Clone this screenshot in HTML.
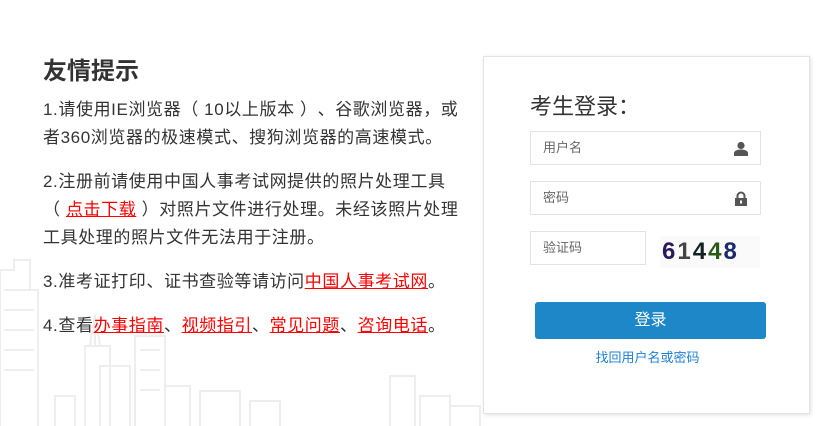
<!DOCTYPE html>
<html><head><meta charset="utf-8"><style>
*{margin:0;padding:0;box-sizing:border-box}
body{width:821px;height:426px;background:#fff;position:relative;overflow:hidden;font-family:"Liberation Sans","Noto Sans CJK SC",sans-serif;color:#333;text-spacing-trim:space-all}
.sky{position:absolute;left:0;top:0}
.tips{position:absolute;left:43px;top:56px;width:440px;white-space:nowrap}
.tips h2{font-size:24px;font-weight:bold;color:#333;line-height:32px;margin-bottom:8px}
.tips p{font-size:17px;line-height:28px;margin-bottom:16px;color:#333;letter-spacing:0.6px}
.tips a{color:#f00;text-decoration:underline}
.panel{position:absolute;left:483px;top:56px;width:327px;height:358px;background:#fff;border:1px solid #e3e3e3;box-shadow:1px 1px 4px rgba(0,0,0,.12)}
.panel h3{position:absolute;left:46px;top:32px;font-size:22px;font-weight:normal;color:#333}
.inp{position:absolute;border:1px solid #e3e3e3;height:34px;font-size:13px;color:#666;line-height:32px;padding-left:12px;background:#fff}
.btn{position:absolute;left:51px;top:245px;width:231px;height:37px;background:#1e87c8;border-radius:3px;color:#fff;font-size:16px;text-align:center;line-height:37px}
.link{position:absolute;left:0;width:327px;top:290px;text-align:center;font-size:13px;color:#1e7fd6}
</style></head><body>
<svg class="sky" width="821" height="426" fill="none" stroke="#eeeeee" stroke-width="2">
<path d="M0 426V270h14v-10h16v30h8v136M4 290h30M4 310h30M4 330h30M4 350h30M4 370h30"/>
<path d="M55 426v-30h20v30M85 426v-80h25v80M95 315v30M90 345l5-30 5 30"/>
<path d="M100 426v-60h30v60M135 426v-90h30v90M140 350h20M140 370h20M140 390h20"/>
<path d="M165 426v-40h25v40M200 426v-35h40v35M250 426v-25h30v25"/>
<path d="M390 426v-50h25v50M420 426v-30h30v30"/>
<path d="M450 426v-20h30v20"/>
</svg>
<div class="tips">
<h2>友情提示</h2>
<p>1.请使用IE浏览器（ 10以上版本 ）、谷歌浏览器，或<br>者360浏览器的极速模式、搜狗浏览器的高速模式。</p>
<p>2.注册前请使用中国人事考试网提供的照片处理工具<br>（ <a>点击下载</a> ）对照片文件进行处理。未经该照片处理<br>工具处理的照片文件无法用于注册。</p>
<p>3.准考证打印、证书查验等请访问<a>中国人事考试网</a>。</p>
<p>4.查看<a>办事指南</a>、<a>视频指引</a>、<a>常见问题</a>、<a>咨询电话</a>。</p>
</div>
<div class="panel">
<h3>考生登录：</h3>
<div class="inp" style="left:46px;top:74px;width:231px">用户名
<svg style="position:absolute;right:12px;top:9px" width="14" height="15" viewBox="0 0 14 15"><circle cx="7" cy="4.5" r="3.6" fill="#555"/><path d="M0 15v-3c0-2 3-3.5 7-3.5s7 1.5 7 3.5v3z" fill="#555"/></svg></div>
<div class="inp" style="left:46px;top:124px;width:231px">密码
<svg style="position:absolute;right:12px;top:9px" width="14" height="15" viewBox="0 0 14 15"><path d="M3.5 7V5a3.5 3.5 0 0 1 7 0v2" stroke="#555" stroke-width="2" fill="none"/><rect x="1" y="7" width="12" height="8" fill="#555"/><rect x="6" y="9.5" width="2" height="3" fill="#fff"/></svg></div>
<div class="inp" style="left:46px;top:174px;width:116px">验证码</div>
<div style="position:absolute;left:176px;top:179px;width:100px;height:32px;background:#fafafa;font:bold 24px 'Liberation Sans',sans-serif;letter-spacing:2px;line-height:32px;padding-left:2px"><span style="color:#2a1a5a">6</span><span style="color:#444">1</span><span style="color:#122">4</span><span style="color:#2a5a1a">4</span><span style="color:#1a2a6a">8</span></div>
<div class="btn">登录</div>
<div class="link">找回用户名或密码</div>
</div>
</body></html>
